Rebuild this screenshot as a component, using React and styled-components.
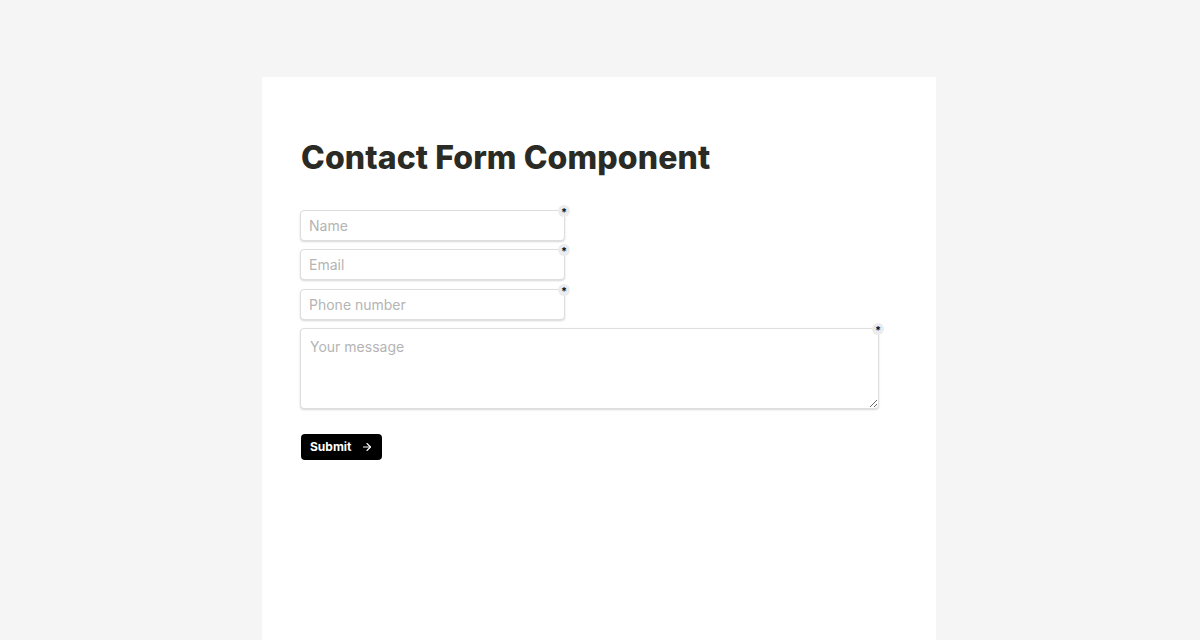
import React from 'react'
import styled, { createGlobalStyle } from 'styled-components'
import { ArrowRight } from 'lucide-react'

const GlobalStyle = createGlobalStyle`
  * { box-sizing: border-box; }
  html, body {
    margin: 0;
    padding: 0;
    background: #f5f5f5;
    font-family: Inter, "Liberation Sans", Arial, sans-serif;
  }
`

const Page = styled.main`
  min-height: 640px;
  padding: 77px 0 0 262px;
  display: flex;
`

const Card = styled.section`
  width: 674px;
  min-height: 563px;
  background: #fff;
  padding: 62px 38px 40px 38px;
`

const Heading = styled.h1`
  margin: 0 0 33px 1px;
  font-size: 32px;
  line-height: 38px;
  font-weight: 800;
  letter-spacing: 0.1px;
  color: #2b2b25;
`

const Form = styled.form`
  display: flex;
  flex-direction: column;
  align-items: flex-start;
  gap: 8.3px;
`

const Field = styled.div`
  position: relative;
  width: ${({ $wide }) => ($wide ? '579px' : '265px')};
`

const Required = styled.span`
  position: absolute;
  top: -5px;
  right: -5px;
  width: 12px;
  height: 12px;
  border-radius: 50%;
  background: #ececec;
  color: #111;
  font-size: 11px;
  font-weight: 700;
  line-height: 14px;
  text-align: center;
`

const Input = styled.input`
  display: block;
  width: 100%;
  height: 31px;
  padding: 0 8px;
  border: 1px solid #dedede;
  border-radius: 4px;
  box-shadow: 0 1px 2px rgba(0, 0, 0, 0.16);
  font-family: inherit;
  font-size: 14px;
  color: #333;
  background: #fff;
  outline: none;

  &::placeholder { color: #b4b4b4; }
`

const TextArea = styled.textarea`
  display: block;
  width: 100%;
  height: 81px;
  padding: 9px 9px;
  border: 1px solid #dedede;
  border-radius: 4px;
  box-shadow: 0 1px 2px rgba(0, 0, 0, 0.16);
  font-family: inherit;
  font-size: 14px;
  color: #333;
  resize: vertical;
  outline: none;

  &::placeholder { color: #b4b4b4; }
`

const Button = styled.button`
  margin: 16.5px 0 0 1px;
  display: inline-flex;
  align-items: center;
  gap: 9px;
  height: 26px;
  padding: 0 9px;
  border: none;
  border-radius: 4px;
  background: #000;
  color: #fff;
  font-family: inherit;
  font-size: 12px;
  font-weight: 700;
  cursor: pointer;
`

const fields = [
  { type: 'text', placeholder: 'Name' },
  { type: 'email', placeholder: 'Email' },
  { type: 'tel', placeholder: 'Phone number' },
]

const App = () => {
  return (
    <>
      <GlobalStyle />
      <Page>
        <Card>
          <Heading>Contact Form Component</Heading>
          <Form onSubmit={(e) => e.preventDefault()}>
            {fields.map((f) => (
              <Field key={f.placeholder}>
                <Input type={f.type} placeholder={f.placeholder} required />
                <Required>*</Required>
              </Field>
            ))}
            <Field $wide>
              <TextArea placeholder='Your message' required />
              <Required>*</Required>
            </Field>
            <Button type='submit'>
              Submit <ArrowRight size={12} strokeWidth={2.2} />
            </Button>
          </Form>
        </Card>
      </Page>
    </>
  )
}

export default App
